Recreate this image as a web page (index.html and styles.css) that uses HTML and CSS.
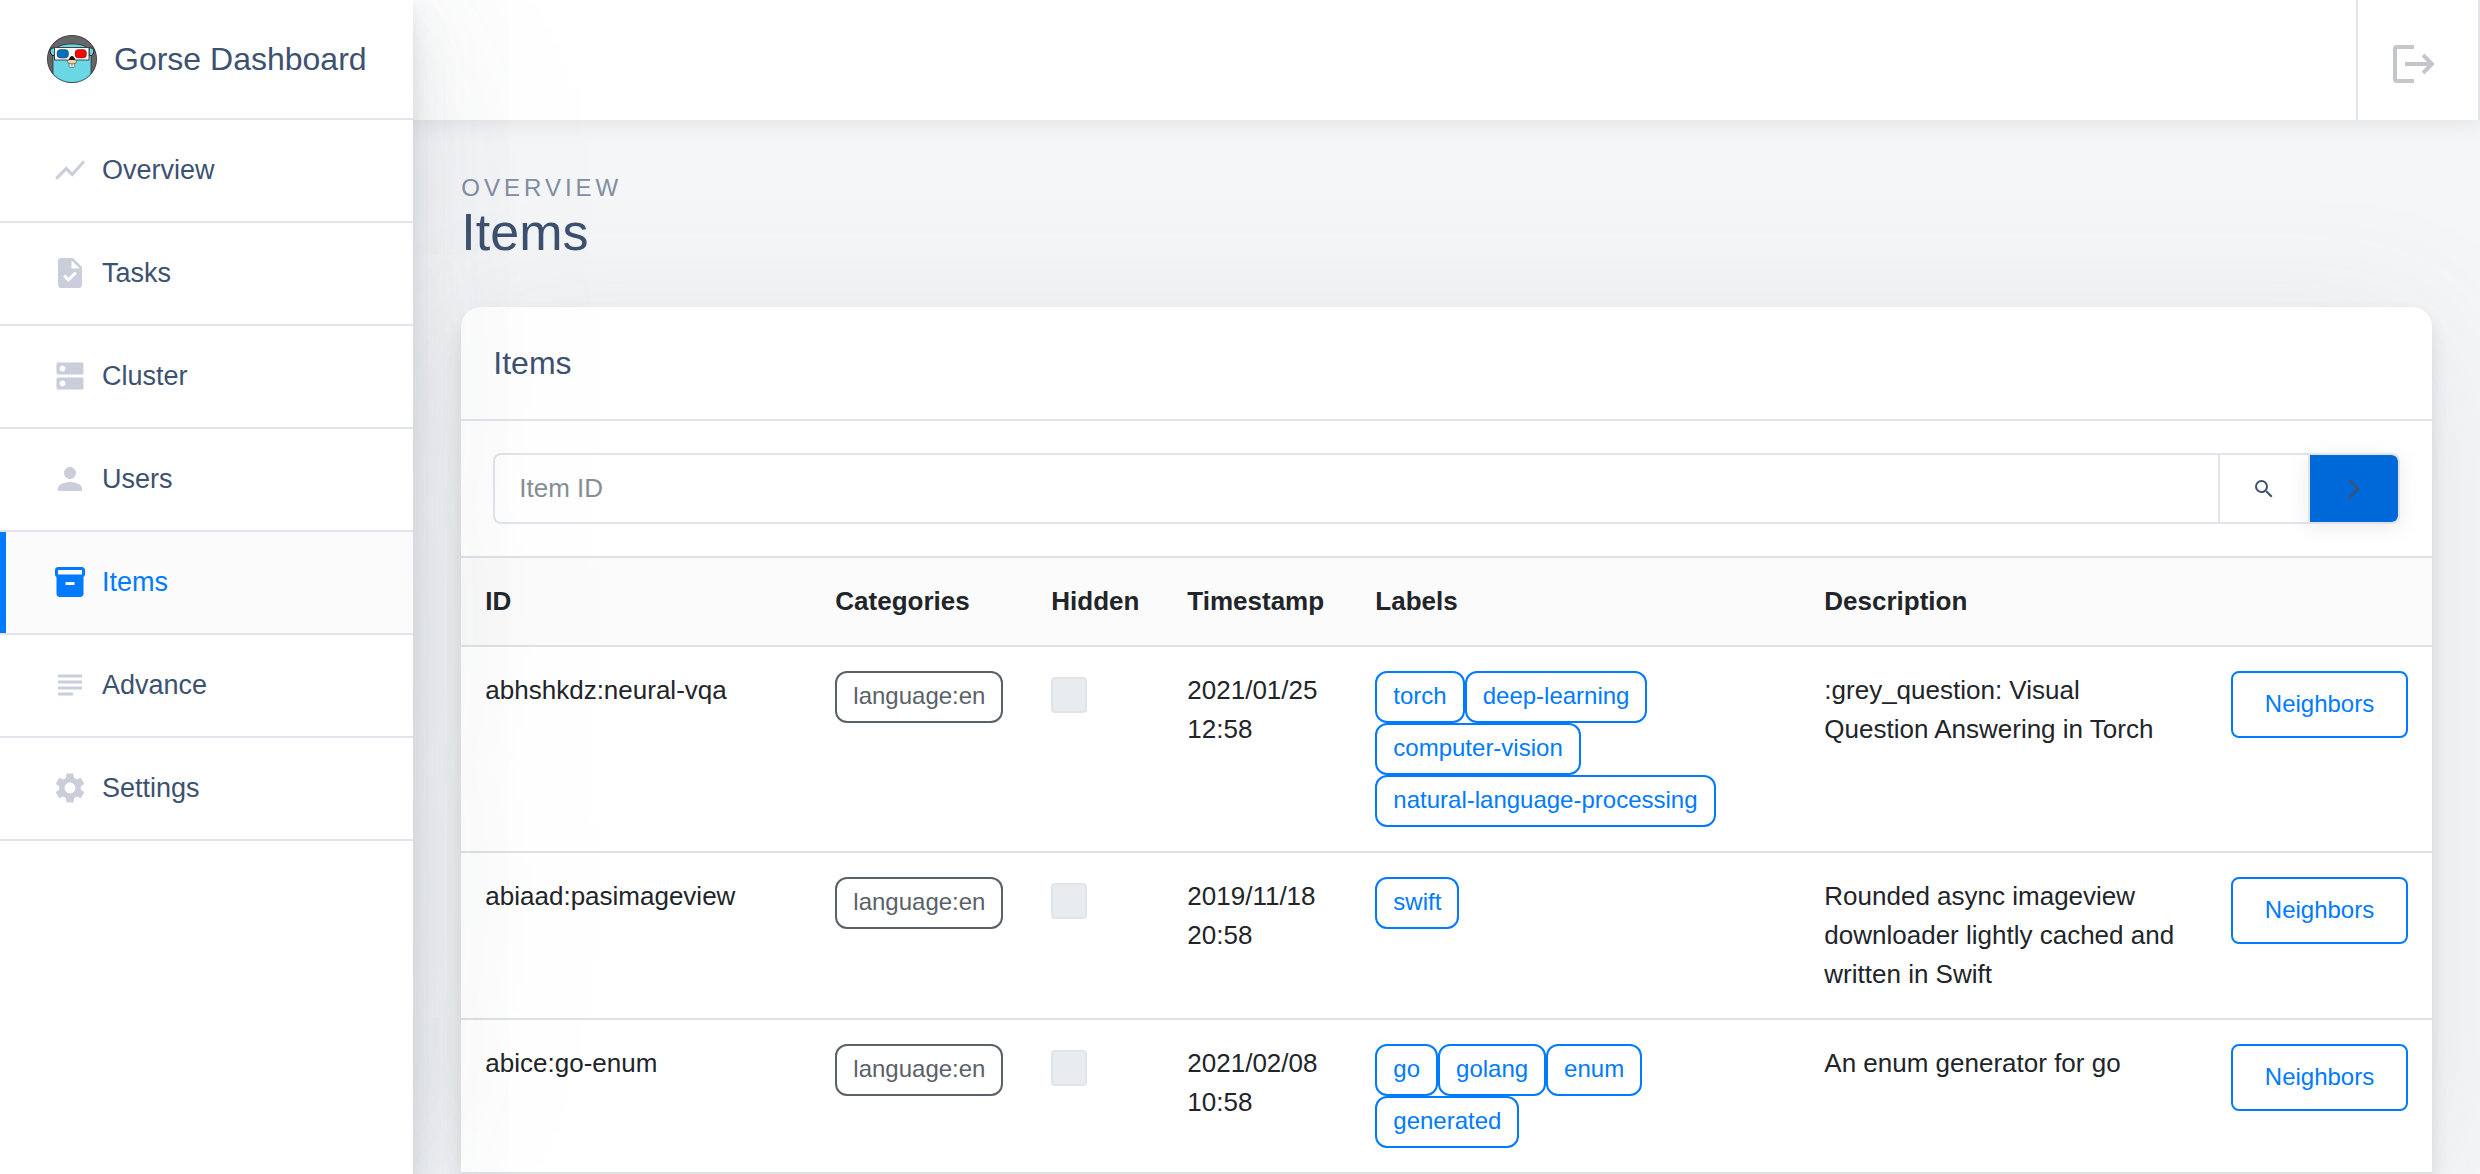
FILE: index.html
```html
<!DOCTYPE html>
<html lang="en">
<head>
<meta charset="utf-8">
<title>Gorse Dashboard</title>
<link rel="stylesheet" href="styles.css">
</head>
<body>
<div class="layout">
  <aside class="sidebar">
    <a class="brand" href="#">
      <svg class="brand-logo" viewBox="0 0 50 48" aria-hidden="true">
        <defs><clipPath id="logo-clip"><ellipse cx="25" cy="24" rx="25" ry="24"/></clipPath></defs>
        <g clip-path="url(#logo-clip)">
          <rect width="50" height="48" fill="#666"/>
          <path d="M6 48V20C7 11 16 9 25 9s18 2 19 11v28z" fill="#6ad7e5" stroke="#222" stroke-width=".7"/>
          <path d="M8 13c-4-1-6 3-4 6 1 2 3 2 4 1zM42 13c4-1 6 3 4 6-1 2-3 2-4 1z" fill="#6ad7e5" stroke="#111" stroke-width="1"/>
          <rect x="7.500" y="12.500" width="34.500" height="12.500" fill="#fff" stroke="#444" stroke-width="1"/>
          <rect x="10" y="14.500" width="11.500" height="8.500" rx="3.500" fill="#0071bc" stroke="#333" stroke-width=".5"/>
          <rect x="28" y="14.500" width="11.500" height="8.500" rx="3.500" fill="#f00" stroke="#333" stroke-width=".5"/>
          <rect x="22.200" y="28" width="5.400" height="4.500" rx="1" fill="#fff" stroke="#444" stroke-width=".6"/>
          <path d="M25 28v4" stroke="#444" stroke-width=".6"/>
          <ellipse cx="25" cy="26.600" rx="4.500" ry="2.300" fill="#f6d2a2" stroke="#333" stroke-width=".6"/>
          <path d="M22 25c0-3 2-4 3-4s3 1 3 4z" fill="#111"/>
          <ellipse cx="25" cy="24" rx="24.600" ry="23.600" fill="none" stroke="#333" stroke-width=".8"/>
        </g>
      </svg>
      <span>Gorse Dashboard</span>
    </a>
    <nav>
      <a class="nav-link" href="#"><svg class="nav-icon" viewBox="0 0 24 24" aria-hidden="true"><path d="M3.500 18.490l6-6.010 4 4L22 6.920l-1.410-1.410-7.090 7.970-4-4L2 16.990z"/></svg>Overview</a>
      <a class="nav-link" href="#"><svg class="nav-icon" viewBox="0 0 24 24" aria-hidden="true"><path d="M14 2H6c-1.100 0-1.990.9-1.990 2L4 20c0 1.100.89 2 1.990 2H18c1.100 0 2-.9 2-2V8l-6-6zm-3.060 16L7.400 14.460l1.410-1.410 2.120 2.120 4.240-4.240 1.410 1.410L10.940 18zM13 9V3.500L18.500 9H13z"/></svg>Tasks</a>
      <a class="nav-link" href="#"><svg class="nav-icon" viewBox="0 0 24 24" aria-hidden="true"><path d="M20 13H4c-.55 0-1 .45-1 1v6c0 .55.45 1 1 1h16c.55 0 1-.45 1-1v-6c0-.55-.45-1-1-1zM7 19c-1.100 0-2-.9-2-2s.9-2 2-2 2 .9 2 2-.9 2-2 2zM20 3H4c-.55 0-1 .45-1 1v6c0 .55.45 1 1 1h16c.55 0 1-.45 1-1V4c0-.55-.45-1-1-1zM7 9c-1.100 0-2-.9-2-2s.9-2 2-2 2 .9 2 2-.9 2-2 2z"/></svg>Cluster</a>
      <a class="nav-link" href="#"><svg class="nav-icon" viewBox="0 0 24 24" aria-hidden="true"><path d="M12 12c2.210 0 4-1.790 4-4s-1.790-4-4-4-4 1.790-4 4 1.790 4 4 4zm0 2c-2.670 0-8 1.340-8 4v2h16v-2c0-2.660-5.330-4-8-4z"/></svg>Users</a>
      <a class="nav-link active" href="#" aria-current="page"><svg class="nav-icon" viewBox="0 0 24 24" aria-hidden="true"><path d="M20 2H4c-1 0-2 .9-2 2v3.010c0 .72.43 1.340 1 1.690V20c0 1.100 1.100 2 2 2h14c.9 0 2-.9 2-2V8.700c.57-.35 1-.97 1-1.690V4c0-1.100-1-2-2-2zm-5 12H9v-2h6v2zm5-7H4V4h16v3z"/></svg>Items</a>
      <a class="nav-link" href="#"><svg class="nav-icon" viewBox="0 0 24 24" aria-hidden="true"><path d="M14 17H4v2h10v-2zm6-8H4v2h16V9zM4 15h16v-2H4v2zM4 5v2h16V5H4z"/></svg>Advance</a>
      <a class="nav-link" href="#"><svg class="nav-icon" viewBox="0 0 24 24" aria-hidden="true"><path d="M19.140 12.940c.04-.3.060-.61.060-.94 0-.32-.02-.64-.07-.94l2.030-1.580c.18-.14.23-.41.12-.61l-1.920-3.320c-.12-.22-.37-.29-.59-.22l-2.390.96c-.5-.38-1.030-.7-1.620-.94l-.36-2.540c-.04-.24-.24-.41-.48-.41h-3.840c-.24 0-.43.17-.47.41l-.36 2.540c-.59.24-1.130.57-1.620.94l-2.390-.96c-.22-.08-.47 0-.59.22L2.740 8.870c-.12.21-.08.47.12.61l2.030 1.580c-.05.3-.09.63-.09.94s.02.64.07.94l-2.030 1.580c-.18.14-.23.41-.12.61l1.920 3.320c.12.22.37.29.59.22l2.390-.96c.5.38 1.030.7 1.620.94l.36 2.540c.05.24.24.41.48.41h3.840c.24 0 .44-.17.47-.41l.36-2.540c.59-.24 1.130-.56 1.620-.94l2.390.96c.22.080.47 0 .59-.22l1.920-3.320c.12-.22.070-.47-.12-.61l-2.010-1.580zM12 15.600c-1.980 0-3.600-1.620-3.600-3.600s1.620-3.600 3.600-3.600 3.600 1.620 3.600 3.600-1.620 3.600-3.600 3.600z"/></svg>Settings</a>
    </nav>
  </aside>

  <div class="content">
    <header class="topbar">
      <a class="logout" href="#" aria-label="Log out">
        <svg viewBox="0 0 42 38" aria-hidden="true">
          <path d="M21 2H4a2 2 0 0 0-2 2v30a2 2 0 0 0 2 2h17M12 19h27M30 10l9 9-9 9" fill="none" stroke="currentColor" stroke-width="4"/>
        </svg>
      </a>
    </header>

    <main class="main">
      <div class="page-header">
        <span class="page-subtitle">Overview</span>
        <h1 class="page-title">Items</h1>
      </div>

      <section class="card">
        <h2 class="card-header">Items</h2>
        <form class="search">
          <input class="search-input" type="text" placeholder="Item ID" aria-label="Item ID">
          <button class="search-btn" type="button" aria-label="Search">
            <svg viewBox="0 0 24 24" aria-hidden="true"><path d="M15.500 14h-.79l-.28-.27A6.471 6.471 0 0 0 16 9.500 6.500 6.500 0 1 0 9.500 16c1.610 0 3.090-.59 4.230-1.570l.27.28v.79l5 4.990L20.490 19l-4.990-5zm-6 0C7.010 14 5 11.990 5 9.500S7.010 5 9.500 5 14 7.010 14 9.500 11.990 14 9.500 14z"/></svg>
          </button>
          <button class="search-btn next" type="button" aria-label="Next page">
            <svg viewBox="0 0 24 24" aria-hidden="true"><path d="M6.230 20.230L8 22l10-10L8 2 6.230 3.770 14.460 12z"/></svg>
          </button>
        </form>
        <table class="items">
          <colgroup>
            <col class="col-id"><col class="col-categories"><col class="col-hidden"><col class="col-timestamp"><col class="col-labels"><col><col class="col-action">
          </colgroup>
          <thead>
            <tr><th>ID</th><th>Categories</th><th>Hidden</th><th>Timestamp</th><th>Labels</th><th>Description</th><th></th></tr>
          </thead>
          <tbody>
            <tr>
              <td>abhshkdz:neural-vqa</td>
              <td><div class="badges"><span class="badge muted">language:en</span></div></td>
              <td><input class="check" type="checkbox" disabled aria-label="Hidden"></td>
              <td>2021/01/25 12:58</td>
              <td><div class="badges"><span class="badge">torch</span><span class="badge">deep-learning</span><span class="badge">computer-vision</span><span class="badge">natural-language-processing</span></div></td>
              <td>:grey_question: Visual Question Answering in Torch</td>
              <td><button class="btn" type="button">Neighbors</button></td>
            </tr>
            <tr>
              <td>abiaad:pasimageview</td>
              <td><div class="badges"><span class="badge muted">language:en</span></div></td>
              <td><input class="check" type="checkbox" disabled aria-label="Hidden"></td>
              <td>2019/11/18 20:58</td>
              <td><div class="badges"><span class="badge">swift</span></div></td>
              <td>Rounded async imageview downloader lightly cached and written in Swift</td>
              <td><button class="btn" type="button">Neighbors</button></td>
            </tr>
            <tr>
              <td>abice:go-enum</td>
              <td><div class="badges"><span class="badge muted">language:en</span></div></td>
              <td><input class="check" type="checkbox" disabled aria-label="Hidden"></td>
              <td>2021/02/08 10:58</td>
              <td><div class="badges"><span class="badge">go</span><span class="badge">golang</span><span class="badge">enum</span><span class="badge">generated</span></div></td>
              <td>An enum generator for go</td>
              <td><button class="btn" type="button">Neighbors</button></td>
            </tr>
          </tbody>
        </table>
      </section>
    </main>
  </div>
</div>
</body>
</html>
```

FILE: styles.css
```css
* {
  box-sizing: border-box;
}

body {
  margin: 0;
  background: #f5f6f8;
  color: #212529;
  font-family: "Liberation Sans", Arial, sans-serif;
  font-size: 26px;
  line-height: 39px;
}

a {
  color: inherit;
  text-decoration: none;
}

button,
input {
  margin: 0;
  font-family: inherit;
}

.layout {
  display: grid;
  grid-template-columns: 1fr 5fr;
  min-height: 100vh;
  overflow: hidden;
}

/* Sidebar */

.sidebar {
  z-index: 2;
  background: #fff;
  color: #3d5170;
  box-shadow:
    0 4px 300px rgba(90, 97, 105, .12),
    0 8px 16px rgba(90, 97, 105, .12),
    0 30px 44px rgba(90, 97, 105, .1),
    0 14px 70px rgba(165, 182, 201, .1);
}

.brand {
  display: flex;
  align-items: center;
  gap: 17px;
  height: 120px;
  padding-left: 47px;
  border-bottom: 2px solid #e1e5eb;
  font-size: 32px;
}

.brand-logo {
  width: 50px;
  height: 48px;
}

.nav-link {
  display: flex;
  align-items: center;
  gap: 14px;
  height: 103px;
  padding-bottom: 1px;
  padding-left: 52px;
  border-bottom: 2px solid #e1e5eb;
  font-size: 27px;
}

.nav-icon {
  width: 36px;
  height: 36px;
  fill: #cacedb;
}

.nav-link.active {
  background: #fbfbfb;
  box-shadow: inset 6px 0 0 #007bff;
  color: #007bff;
}

.nav-link.active .nav-icon {
  fill: #007bff;
}

/* Content */

.content {
  display: flex;
  flex-direction: column;
  min-width: 0;
}

.topbar {
  display: flex;
  justify-content: flex-end;
  height: 120px;
  background: #fff;
  box-shadow: 0 4px 20px rgba(90, 97, 105, .12);
  z-index: 1;
}

.logout {
  display: flex;
  align-items: center;
  width: 124px;
  padding: 8px 0 0 35px;
  border: solid #e1e5eb;
  border-width: 0 2px;
  color: #c3c7cc;
}

.logout svg {
  width: 42px;
  height: 38px;
}

.main {
  display: flex;
  flex: 1;
  flex-direction: column;
  padding: 50px 48px 0;
}

.page-header {
  display: flex;
  flex-direction: column;
  padding-bottom: 49px;
}

.page-subtitle {
  color: #818ea3;
  font-size: 24px;
  line-height: 36px;
  letter-spacing: 4px;
  text-transform: uppercase;
}

.page-title {
  margin: 0;
  color: #3d5170;
  font-size: 52px;
  font-weight: 500;
  line-height: 52px;
}

.card {
  flex: 1;
  border-radius: 20px 20px 0 0;
  background: #fff;
  box-shadow:
    0 4px 0 rgba(90, 97, 105, .11),
    0 8px 16px rgba(90, 97, 105, .12),
    0 20px 20px rgba(90, 97, 105, .06),
    0 14px 140px rgba(90, 97, 105, .1);
}

.card-header {
  margin: 0;
  padding: 32px;
  border-bottom: 2px solid #e1e5eb;
  color: #3d5170;
  font-size: 32px;
  font-weight: 500;
  line-height: 48px;
}

.search {
  display: flex;
  height: 135px;
  padding: 32px;
}

.search-input {
  flex: 1;
  min-width: 0;
  padding: 0 24px;
  border: 2px solid #e1e5eb;
  border-right: 0;
  border-radius: 8px 0 0 8px;
  background: transparent;
  color: #495057;
  font-size: 26px;
}

.search-input::placeholder {
  color: #868e96;
}

.search-btn {
  display: flex;
  align-items: center;
  justify-content: center;
  width: 90px;
  padding: 0;
  border: 2px solid #e1e5eb;
  border-right: 0;
  background: #fff;
}

.search-btn svg {
  width: 24px;
  height: 24px;
  fill: #3d5170;
}

.search-btn.next {
  width: 92px;
  border-right: 2px solid #e1e5eb;
  border-radius: 0 8px 8px 0;
  background: #0069d9;
  background-clip: padding-box;
  box-shadow: 0 4px 20px rgba(90, 97, 105, .12);
}

/* Items table */

.items {
  width: 100%;
  table-layout: fixed;
  border-spacing: 0;
  border-bottom: 2px solid #dee2e6;
}

.col-id { width: 350px; }
.col-categories { width: 216px; }
.col-hidden { width: 136px; }
.col-timestamp { width: 188px; }
.col-labels { width: 449px; }
.col-action { width: 225px; }

.items th,
.items td {
  padding: 24px;
  border-top: 2px solid #dee2e6;
  text-align: left;
  vertical-align: top;
}

.items th {
  background: #fbfbfb;
}

.badges {
  display: flex;
  flex-wrap: wrap;
}

.badge {
  padding: 0 16px 2px;
  border: 2px solid #007bff;
  border-radius: 12px;
  color: #007bff;
  font-size: 24px;
  line-height: 46px;
}

.badge.muted {
  border-color: #5a6169;
  color: #5a6169;
}

.check {
  display: block;
  width: 36px;
  height: 36px;
  margin-top: 6px;
  appearance: none;
  border: 2px solid #e1e5eb;
  border-radius: 4px;
  background: #e9ecef;
}

.btn {
  display: block;
  width: 100%;
  height: 67px;
  padding: 0 0 2px;
  border: 2px solid #007bff;
  border-radius: 8px;
  background: transparent;
  color: #007bff;
  font-size: 24px;
}
```
